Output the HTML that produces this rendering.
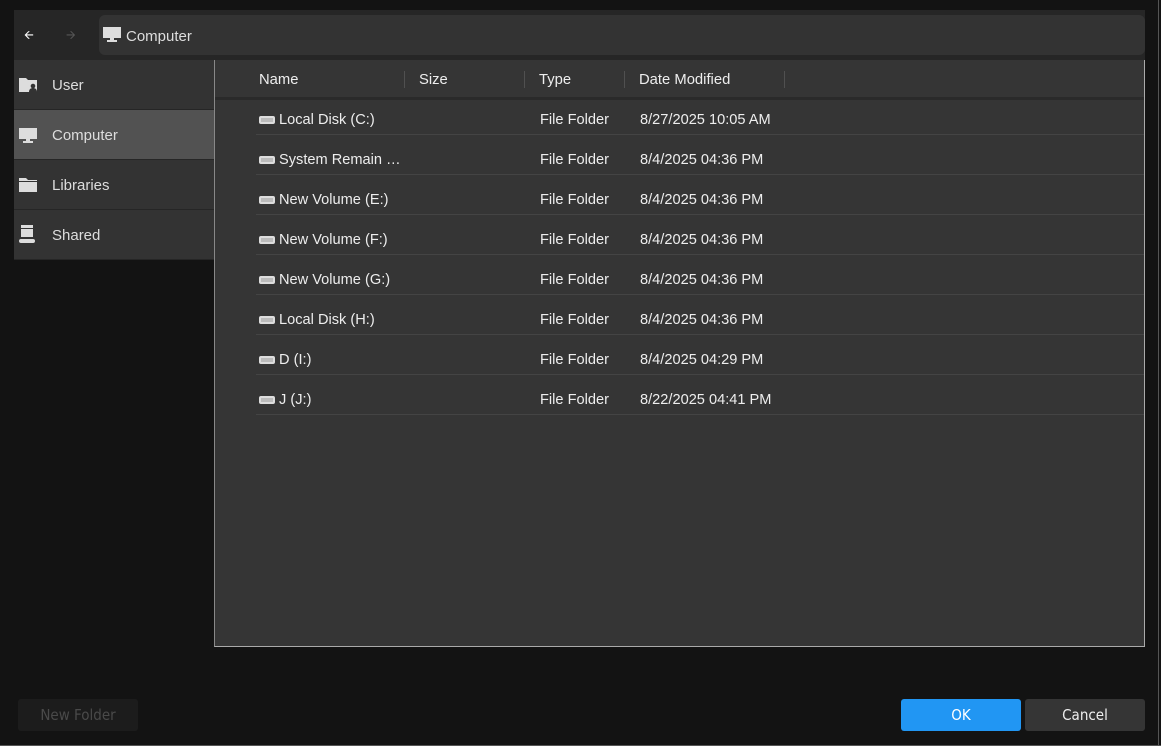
<!DOCTYPE html>
<html><head><style>
*{margin:0;padding:0;box-sizing:border-box}
body{width:1161px;height:746px;background:#131313;font-family:"Liberation Sans",sans-serif;color:#e6e6e6;position:relative;overflow:hidden;font-size:14px}
.abs{position:absolute}
.top{left:14px;top:10px;width:1131px;height:50px;background:#262626}
.addr{left:99px;top:15px;width:1046px;height:40px;background:#333;border-radius:6px}
.side{left:14px;top:60px;width:200px;height:200px;background:#333}
.item{position:absolute;left:0;width:200px;height:50px;line-height:51px;padding-left:38px;font-size:15px;color:#ddd;border-bottom:1px solid #262626}
.panel{left:214px;top:60px;width:931px;height:587px;background:#353535;border-left:1px solid #888;border-right:1px solid #aaa;border-bottom:1px solid #aaa}
.hdr{position:absolute;left:0;top:0;width:929px;height:40px;border-bottom:3px solid #2a2a2a}
.h{position:absolute;top:12px;font-size:14.8px;color:#eee}
.sep{position:absolute;top:11px;width:1px;height:17px;background:#505050}
.row{position:absolute;left:41px;width:888px;height:35px;border-bottom:1px solid #444;font-size:14.6px;color:#eee}
.row span{position:absolute;top:12px}
.dk{position:absolute;left:3px;top:16px;width:16px;height:8px;border:2px solid #ddd;border-radius:2px;background:#bbb}
.btn{position:absolute;top:699px;height:32px;line-height:33px;text-align:center;font-family:"DejaVu Sans Condensed","DejaVu Sans",sans-serif;font-size:15px;border-radius:3px}
</style></head><body>
<div class="abs" style="right:2px;top:0;width:1px;height:746px;background:#555"></div>
<div class="abs" style="left:0;bottom:0;width:1161px;height:1px;background:#555"></div>
<div class="abs top"></div>
<div class="abs" style="left:24px;top:26px;font-size:12px;color:#fff">&#129128;</div>
<div class="abs" style="left:66px;top:26px;font-size:12px;color:#555">&#129130;</div>
<div class="abs addr"></div>
<svg class="abs" style="left:103px;top:27px" width="18" height="16"><rect x="0" y="0" width="18" height="11" fill="#ddd"/><rect x="7" y="11" width="4" height="3" fill="#ddd"/><rect x="4" y="13" width="10" height="2" fill="#ddd"/></svg>
<div class="abs" style="left:126px;top:28px;font-size:15px;color:#ddd">Computer</div>
<div class="abs side">
<div class="item" style="top:0">User</div>
<div class="item" style="top:50px;background:#525252">Computer</div>
<div class="item" style="top:100px">Libraries</div>
<div class="item" style="top:150px">Shared</div>
<svg class="abs" style="left:5px;top:17px" width="20" height="16"><path d="M0 1h7l2 2h9v12H0z" fill="#ddd"/><circle cx="14" cy="9" r="2.3" fill="#333"/><path d="M10 15c0-3 2-4 4-4s4 1 4 4z" fill="#333"/></svg>
<svg class="abs" style="left:5px;top:68px" width="20" height="16"><rect x="0" y="0" width="18" height="11" fill="#ddd"/><rect x="7" y="11" width="4" height="3" fill="#ddd"/><rect x="4" y="13" width="10" height="2" fill="#ddd"/></svg>
<svg class="abs" style="left:5px;top:117px" width="20" height="16"><path d="M0 1h7l2 2h9v12H0z" fill="#ddd"/><rect x="0" y="4" width="18" height="1" fill="#333"/></svg>
<svg class="abs" style="left:5px;top:165px" width="20" height="20"><rect x="2" y="0" width="12" height="12" fill="#ddd"/><rect x="2" y="3" width="12" height="1" fill="#333"/><rect x="0" y="14" width="16" height="4" rx="2" fill="#ddd"/></svg>
</div>
<div class="abs panel">
<div class="hdr">
<div class="h" style="left:44px">Name</div><div class="sep" style="left:189px"></div>
<div class="h" style="left:204px">Size</div><div class="sep" style="left:309px"></div>
<div class="h" style="left:324px">Type</div><div class="sep" style="left:409px"></div>
<div class="h" style="left:424px">Date Modified</div><div class="sep" style="left:569px"></div>
</div>
<div class="row" style="top:40px"><i class="dk"></i><span style="left:23px">Local Disk (C:)</span><span style="left:284px">File Folder</span><span style="left:384px">8/27/2025 10:05 AM</span></div>
<div class="row" style="top:80px"><i class="dk"></i><span style="left:23px">System Remain …</span><span style="left:284px">File Folder</span><span style="left:384px">8/4/2025 04:36 PM</span></div>
<div class="row" style="top:120px"><i class="dk"></i><span style="left:23px">New Volume (E:)</span><span style="left:284px">File Folder</span><span style="left:384px">8/4/2025 04:36 PM</span></div>
<div class="row" style="top:160px"><i class="dk"></i><span style="left:23px">New Volume (F:)</span><span style="left:284px">File Folder</span><span style="left:384px">8/4/2025 04:36 PM</span></div>
<div class="row" style="top:200px"><i class="dk"></i><span style="left:23px">New Volume (G:)</span><span style="left:284px">File Folder</span><span style="left:384px">8/4/2025 04:36 PM</span></div>
<div class="row" style="top:240px"><i class="dk"></i><span style="left:23px">Local Disk (H:)</span><span style="left:284px">File Folder</span><span style="left:384px">8/4/2025 04:36 PM</span></div>
<div class="row" style="top:280px"><i class="dk"></i><span style="left:23px">D (I:)</span><span style="left:284px">File Folder</span><span style="left:384px">8/4/2025 04:29 PM</span></div>
<div class="row" style="top:320px"><i class="dk"></i><span style="left:23px">J (J:)</span><span style="left:284px">File Folder</span><span style="left:384px">8/22/2025 04:41 PM</span></div>
</div>
<div class="btn" style="left:18px;width:120px;background:#1c1c1c;color:#4a4a4a">New Folder</div>
<div class="btn" style="left:901px;width:120px;background:#2196f3;color:#fff">OK</div>
<div class="btn" style="left:1025px;width:120px;background:#353535;color:#eee">Cancel</div>
</body></html>
